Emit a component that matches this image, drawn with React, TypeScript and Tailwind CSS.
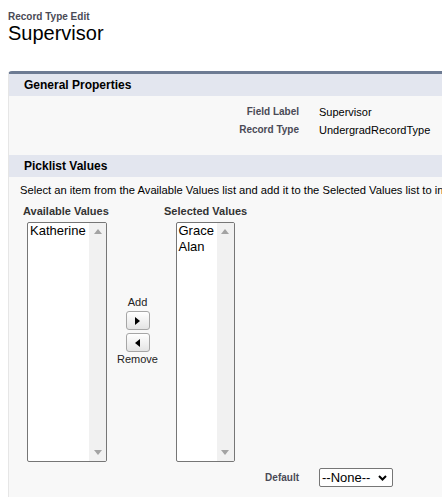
const labelCls = "text-[10px] font-bold text-[#4a4a56] leading-[12px]";

function ScrollArrow({ up }: { up?: boolean }) {
  return (
    <svg width="8" height="5" viewBox="0 0 8 5" className="block">
      <polygon points={up ? "0,5 8,5 4,0" : "0,0 8,0 4,5"} fill="#a3a3a3" />
    </svg>
  );
}

function ListBox({ items, className }: { items: string[]; className: string }) {
  return (
    <div
      className={`flex h-[240px] border border-[#767676] rounded-[2px] bg-white overflow-hidden ${className}`}
    >
      <div className="flex-1 pl-[2px] text-[13px] leading-[16px] text-black">
        {items.map((item) => (
          <div key={item}>{item}</div>
        ))}
      </div>
      {/* empty scrollbar */}
      <div className="w-[17px] bg-[#f1f1f1] flex flex-col items-center justify-between pt-[6px] pb-[6px]">
        <ScrollArrow up />
        <ScrollArrow />
      </div>
    </div>
  );
}

function ArrowButton({ dir }: { dir: "right" | "left" }) {
  return (
    <button className="w-[24px] h-[19px] border border-[#a6a6a6] rounded-[3px] bg-linear-to-b from-white to-[#e4e4e4] flex items-center justify-center">
      <svg width="5" height="8" viewBox="0 0 5 8" className="block">
        <polygon
          points={dir === "right" ? "0,0 5,4 0,8" : "5,0 0,4 5,8"}
          fill="#000"
        />
      </svg>
    </button>
  );
}

function SubHeader({ title }: { title: string }) {
  return (
    <div className="h-[22px] bg-[#e3e6ef] pl-[15px] flex items-center">
      <h3 className="text-[12px] font-bold text-black">{title}</h3>
    </div>
  );
}

export default function App() {
  return (
    <div className="w-[442px] h-[497px] overflow-hidden bg-white font-['Liberation_Sans',Arial,sans-serif] text-black">
      <div className="pl-2 pt-[11px]">
        <div className={labelCls}>Record Type Edit</div>
        <h1 className="text-[20px] leading-[20px] font-normal text-black">Supervisor</h1>
      </div>

      <div className="ml-2 mt-[28px] w-[480px] border-t-[3px] border-t-[#6d7b93] border-l border-l-[#e6e6e6] rounded-tl-[4px] bg-[#f8f8f8] pb-10">
        <SubHeader title="General Properties" />
        <div className="pt-[7px] pb-[16px]">
          {[
            ["Field Label", "Supervisor"],
            ["Record Type", "UndergradRecordType"],
          ].map(([label, value]) => (
            <div key={label} className="flex items-center h-[18px]">
              <div className={`w-[290px] text-right ${labelCls}`}>{label}</div>
              <div className="pl-[20px] text-[11px] text-black">{value}</div>
            </div>
          ))}
        </div>

        <SubHeader title="Picklist Values" />
        <div className="pt-[7px]">
          <p className="pl-[11px] text-[11.2px] leading-[12px] whitespace-nowrap text-black">
            Select an item from the Available Values list and add it to the Selected Values list to include it in this record type.
          </p>

          <div className="flex pl-[14px] mt-[9px]">
            <div className="w-[88px] flex flex-col items-center">
              <div className="w-full text-[11px] leading-[12px] font-bold text-[#333]">Available Values</div>
              <ListBox items={["Katherine"]} className="w-[80px] mt-[5px]" />
            </div>

            <div className="w-[53px] flex flex-col items-center pt-[91px] text-[11px] leading-[12px] text-[#222]">
              <span>Add</span>
              <div className="mt-[3px] flex flex-col gap-[3px]">
                <ArrowButton dir="right" />
                <ArrowButton dir="left" />
              </div>
              <span className="mt-px">Remove</span>
            </div>

            <div className="w-[82px] flex flex-col items-center">
              <div className="w-full whitespace-nowrap text-[11px] leading-[12px] font-bold text-[#333]">Selected Values</div>
              <ListBox items={["Grace", "Alan"]} className="w-[59px] mt-[5px]" />
            </div>
          </div>

          <div className="flex items-center mt-[6px]">
            <div className={`w-[290px] text-right ${labelCls}`}>Default</div>
            <div className="ml-[20px] w-[74px] h-[19px] border border-[#767676] rounded-[2px] bg-white flex items-center justify-between pl-[2px] pr-[5px]">
              <span className="text-[13px] leading-[16px] text-black">--None--</span>
              <svg width="9" height="6" viewBox="0 0 9 6" className="block">
                <polyline points="1,1 4.5,4.5 8,1" fill="none" stroke="#000" strokeWidth="2" />
              </svg>
            </div>
          </div>
        </div>
      </div>
    </div>
  );
}
